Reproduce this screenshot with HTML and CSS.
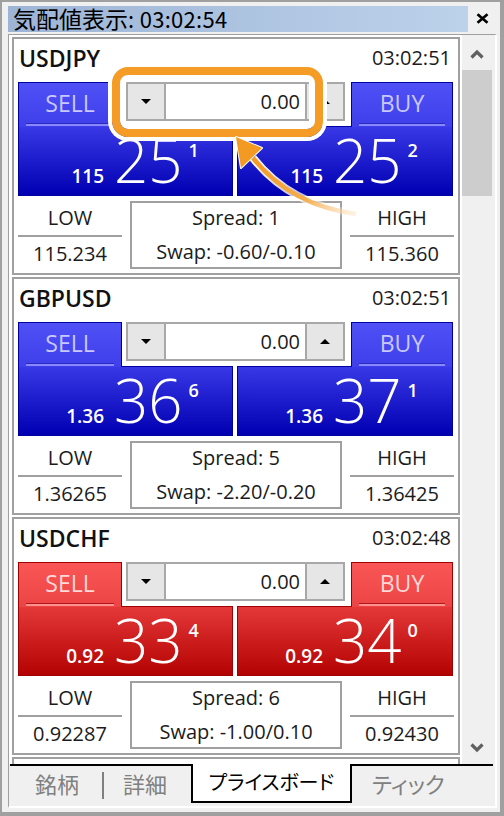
FILE: index.html
```html
<!DOCTYPE html>
<html lang="ja">
<head>
<meta charset="utf-8">
<title>気配値表示</title>
<link rel="stylesheet" href="styles.css">
</head>
<body>
<div class="window">
  <div class="titlerow">
    <div class="titlebar">気配値表示<span class="ttime">: 03:02:54</span></div>
    <div class="close"><svg width="13" height="11" viewBox="0 0 13 11"><path d="M1.5 1.2L11.5 9.8M11.5 1.2L1.5 9.8" stroke="#000" stroke-width="2.6" fill="none"/></svg></div>
  </div>
  <div class="panel">
    <div class="main">
      <div class="list">
        <div class="card blue">
          <div class="head"><span class="sym">USDJPY</span><span class="time">03:02:51</span></div>
          <div class="trade">
            <div class="tab sell">SELL</div>
            <div class="lot">
              <div class="spin"><svg width="10" height="5" viewBox="0 0 10 5"><path d="M0 0H10L5 5Z"/></svg></div>
              <div class="val">0.00</div>
              <div class="spin right"><svg width="10" height="5" viewBox="0 0 10 5"><path d="M0 5H10L5 0Z"/></svg></div>
            </div>
            <div class="tab buy">BUY</div>
            <div class="block bl"><span class="pre">115</span><span class="big">25</span><span class="sup">1</span></div>
            <div class="block br"><span class="pre">115</span><span class="big">25</span><span class="sup">2</span></div>
          </div>
          <div class="stats">
            <div class="hl"><div class="lab">LOW</div><div class="num">115.234</div></div>
            <div class="spread"><div class="s1">Spread: 1</div><div class="s2">Swap: -0.60/-0.10</div></div>
            <div class="hl"><div class="lab">HIGH</div><div class="num">115.360</div></div>
          </div>
        </div>

        <div class="card blue">
          <div class="head"><span class="sym">GBPUSD</span><span class="time">03:02:51</span></div>
          <div class="trade">
            <div class="tab sell">SELL</div>
            <div class="lot">
              <div class="spin"><svg width="10" height="5" viewBox="0 0 10 5"><path d="M0 0H10L5 5Z"/></svg></div>
              <div class="val">0.00</div>
              <div class="spin right"><svg width="10" height="5" viewBox="0 0 10 5"><path d="M0 5H10L5 0Z"/></svg></div>
            </div>
            <div class="tab buy">BUY</div>
            <div class="block bl"><span class="pre">1.36</span><span class="big">36</span><span class="sup">6</span></div>
            <div class="block br"><span class="pre">1.36</span><span class="big">37</span><span class="sup">1</span></div>
          </div>
          <div class="stats">
            <div class="hl"><div class="lab">LOW</div><div class="num">1.36265</div></div>
            <div class="spread"><div class="s1">Spread: 5</div><div class="s2">Swap: -2.20/-0.20</div></div>
            <div class="hl"><div class="lab">HIGH</div><div class="num">1.36425</div></div>
          </div>
        </div>

        <div class="card red">
          <div class="head"><span class="sym">USDCHF</span><span class="time">03:02:48</span></div>
          <div class="trade">
            <div class="tab sell">SELL</div>
            <div class="lot">
              <div class="spin"><svg width="10" height="5" viewBox="0 0 10 5"><path d="M0 0H10L5 5Z"/></svg></div>
              <div class="val">0.00</div>
              <div class="spin right"><svg width="10" height="5" viewBox="0 0 10 5"><path d="M0 5H10L5 0Z"/></svg></div>
            </div>
            <div class="tab buy">BUY</div>
            <div class="block bl"><span class="pre">0.92</span><span class="big">33</span><span class="sup">4</span></div>
            <div class="block br"><span class="pre">0.92</span><span class="big">34</span><span class="sup">0</span></div>
          </div>
          <div class="stats">
            <div class="hl"><div class="lab">LOW</div><div class="num">0.92287</div></div>
            <div class="spread"><div class="s1">Spread: 6</div><div class="s2">Swap: -1.00/0.10</div></div>
            <div class="hl"><div class="lab">HIGH</div><div class="num">0.92430</div></div>
          </div>
        </div>

        <div class="card"></div>
      </div>
      <div class="scrollbar">
        <div class="sbtn up"><svg width="14" height="10" viewBox="0 0 14 10"><path d="M1.5 8.5L7 3L12.5 8.5" fill="none" stroke="#606060" stroke-width="3.2"/></svg></div>
        <div class="thumb"></div>
        <div class="sbtn down"><svg width="14" height="10" viewBox="0 0 14 10"><path d="M1.5 1.5L7 7L12.5 1.5" fill="none" stroke="#606060" stroke-width="3.2"/></svg></div>
      </div>
    </div>
    <div class="tabs">
      <div class="tseg left"><span class="tt t1">銘柄</span><span class="sep"></span><span class="tt">詳細</span></div>
      <div class="tact">プライスボード</div>
      <div class="tseg right"><span class="tt">ティック</span></div>
    </div>
  </div>

  <div class="highlight"></div>
  <svg class="arrow" width="504" height="816" viewBox="0 0 504 816">
    <defs>
      <linearGradient id="ag" gradientUnits="userSpaceOnUse" x1="254" y1="158" x2="356" y2="214">
        <stop offset="0" stop-color="#f39a22"/>
        <stop offset="0.55" stop-color="#f5ad4c"/>
        <stop offset="1" stop-color="#fbe0bb" stop-opacity="0.4"/>
      </linearGradient>
      <linearGradient id="wg" gradientUnits="userSpaceOnUse" x1="254" y1="158" x2="356" y2="214">
        <stop offset="0" stop-color="#fff"/>
        <stop offset="0.6" stop-color="#fff" stop-opacity="0.7"/>
        <stop offset="1" stop-color="#fff" stop-opacity="0"/>
      </linearGradient>
    </defs>
    <path d="M356 214 Q290 205 253 158" fill="none" stroke="url(#wg)" stroke-width="8"/>
    <path d="M356 214 Q290 205 253 158" fill="none" stroke="url(#ag)" stroke-width="4.5"/>
    <path d="M236 137 L241 168 L262 148 Z" fill="#f39a22" stroke="#fff" stroke-width="2" stroke-linejoin="round" paint-order="stroke"/>
  </svg>
</div>
</body>
</html>
```

FILE: styles.css
```css
* { box-sizing: border-box; margin: 0; padding: 0; }
body {
  margin: 0;
  background: #f0f0f0;
  font-family: "Open Sans", "Noto Sans CJK JP", sans-serif;
  color: #1b1b1b;
}
.window {
  position: relative;
  width: 504px;
  height: 816px;
  border-style: solid;
  border-color: #a0a0a0;
  border-width: 2px 4px 4px 2px;
  background: #f0f0f0;
  padding: 4px 3px 4px 6px;
  overflow: hidden;
}
.titlerow { display: flex; height: 26px; margin-bottom: 2px; }
.titlebar {
  width: 460px;
  background: linear-gradient(to right, #9db4d5, #bcd2eb);
  font-family: "Noto Sans CJK JP", sans-serif;
  font-size: 23px;
  line-height: 25px;
  padding-left: 5px;
  color: #000;
  white-space: nowrap;
}
.ttime { font-size: 22px; letter-spacing: 0.3px; }
.close { flex: 1; display: flex; align-items: center; justify-content: center; padding-bottom: 2px; }

.panel {
  height: 774px;
  border-style: solid;
  border-color: #a0a0a0 #fff #fff #a0a0a0;
  border-width: 1px 2px 2px 1px;
  display: flex;
  flex-direction: column;
}
.main { height: 729px; display: flex; }
.list {
  width: 453px;
  background: #fff;
  padding: 2px 0 0 3px;
  overflow: hidden;
}
.card {
  width: 448px;
  height: 238px;
  border: 2px solid #a0a0a0;
  margin-bottom: 2px;
  padding: 0 4px;
  background: #fff;
}
.head {
  height: 43px;
  display: flex;
  justify-content: space-between;
  align-items: center;
  padding: 0 3px 5px 1px;
}
.sym { font-size: 23px; font-weight: 600; line-height: 1; color: #111; }
.time { font-size: 20px; line-height: 1; color: #1b1b1b; }

.trade {
  display: grid;
  grid-template-columns: 104px 111px 4px 114px 102px;
  grid-template-rows: 44px 70px;
  height: 114px;
}
.tab {
  position: relative;
  z-index: 1;
  margin-bottom: -1px;
  border: 1px solid;
  border-bottom: none;
  text-align: center;
  font-size: 23px;
  line-height: 40px;
}
.tab::after {
  content: "";
  position: absolute;
  left: 7px;
  right: 7px;
  bottom: 1px;
  height: 2px;
}
.tab.sell { grid-area: 1 / 1 / 2 / 2; }
.tab.buy { grid-area: 1 / 5 / 2 / 6; }
.lot {
  grid-area: 1 / 2 / 2 / 5;
  margin: 0 6px 0 4px;
  height: 39px;
  border: 2px solid #a8a8a8;
  display: flex;
  background: #fff;
}
.spin {
  width: 38px;
  background: #e6e6e6;
  border-right: 2px solid #a8a8a8;
  display: flex;
  align-items: center;
  justify-content: center;
}
.spin.right { border-right: none; border-left: 2px solid #a8a8a8; }
.spin svg path { fill: #000; }
.val {
  flex: 1;
  text-align: right;
  padding-right: 5px;
  font-size: 20px;
  line-height: 35px;
  color: #1b1b1b;
}
.block {
  border: 1px solid;
  display: flex;
  align-items: baseline;
  padding-top: 3px;
  color: #fff;
}
.block.bl { grid-area: 2 / 1 / 3 / 3; }
.block.br { grid-area: 2 / 4 / 3 / 6; }
.pre {
  width: 85px;
  text-align: right;
  font-size: 19px;
  font-weight: 600;
  line-height: 19px;
}
.big {
  font-size: 60px;
  line-height: 60px;
  font-weight: 300;
  margin-left: 10px;
}
.sup {
  align-self: flex-start;
  font-size: 18px;
  font-weight: 600;
  line-height: 18px;
  margin-top: 11px;
  margin-left: 6px;
}

.blue .tab { border-color: #0000a0; background: linear-gradient(#5050f6, #3f3feb); color: #c8c8ff; }
.blue .tab::after { background: #8888ff; border-top: 1px solid #2a2ac0; }
.blue .block { border-color: #0000a0; background: linear-gradient(#3838e6, #0000b2); }
.red .tab { border-color: #a00000; background: linear-gradient(#fa5656, #ec4444); color: #ffd8d8; }
.red .tab::after { background: #ff9090; border-top: 1px solid #b01818; }
.red .block { border-color: #a00000; background: linear-gradient(#e43838, #b40202); }

.stats {
  display: grid;
  grid-template-columns: 104px 212px 104px;
  column-gap: 8px;
  height: 77px;
  font-size: 20px;
  color: #1b1b1b;
}
.hl { text-align: center; }
.lab {
  height: 41px;
  line-height: 40px;
  padding-top: 2px;
  border-bottom: 2px solid #a0a0a0;
}
.num { line-height: 33px; }
.spread {
  margin-top: 5px;
  height: 68px;
  border: 2px solid #a0a0a0;
  text-align: center;
}
.s1 { line-height: 30px; }
.s2 { line-height: 30px; margin-top: 4px; }

.scrollbar {
  width: 33px;
  display: flex;
  flex-direction: column;
  background: #f0f0f0;
}
.sbtn {
  width: 30px;
  display: flex;
  justify-content: center;
  align-items: center;
}
.sbtn.up { height: 35px; padding-top: 3px; }
.thumb { width: 30px; height: 126px; background: #cdcdcd; }
.sbtn.down { height: 32px; margin-top: auto; }

.tabs {
  height: 42px;
  display: flex;
  padding-left: 1px;
  font-family: "Noto Sans CJK JP", sans-serif;
  font-size: 22px;
  font-feature-settings: "palt";
}
.tseg {
  border-top: 2px solid #000;
  color: #808080;
  line-height: 34px;
  display: flex;
  align-items: flex-start;
}
.tseg.left { width: 181px; padding-left: 25px; }
.tseg.right { width: 141px; padding-left: 20px; }
.sep {
  display: inline-block;
  width: 2px;
  height: 27px;
  background: #808080;
  margin: 6px 19px 0 23px;
}
.tact {
  width: 161px;
  height: 39px;
  border: 2px solid #000;
  border-top: none;
  background: #fff;
  text-align: center;
  line-height: 36px;
  color: #000;
  font-size: 20px;
}

.highlight {
  position: absolute;
  left: 110px;
  top: 65px;
  width: 211px;
  height: 70px;
  border: 8px solid #f49c26;
  border-radius: 16px;
  box-shadow: 0 0 0 4px #fff, inset 0 0 0 6px #fff;
  z-index: 5;
}
.arrow {
  position: absolute;
  left: -2px;
  top: -2px;
  z-index: 6;
  pointer-events: none;
}
```
